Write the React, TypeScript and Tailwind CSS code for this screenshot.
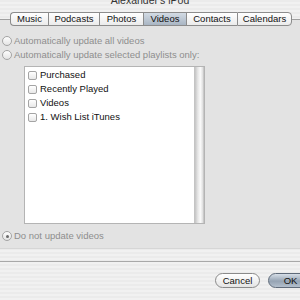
import React from 'react'

const tabs = [
  { name: 'Music', w: 'w-[38px]' },
  { name: 'Podcasts', w: 'w-[51px]' },
  { name: 'Photos', w: 'w-[44px]' },
  { name: 'Videos', w: 'w-[43px]', active: true },
  { name: 'Contacts', w: 'w-[51px]' },
  { name: 'Calendars', w: 'w-[55px]' },
]

const playlists = ['Purchased', 'Recently Played', 'Videos', '1. Wish List iTunes']

function Radio({ label, checked }: { label: string; checked?: boolean }) {
  return (
    <div className="flex items-center h-[14px] pl-[2px]">
      <span className="w-[10px] h-[10px] rounded-full border border-[#a4a4a4] bg-[linear-gradient(to_bottom,#fdfdfd,#e4e4e4)] flex items-center justify-center">
        {checked && <span className="w-[3px] h-[3px] rounded-full bg-[#6a6a6a]" />}
      </span>
      <span className="ml-[2px] text-[#8e8e8e] text-[9.5px] leading-none">{label}</span>
    </div>
  )
}

export default function App() {
  return (
    <div className="w-[300px] h-[300px] overflow-hidden bg-[repeating-linear-gradient(to_bottom,#ebebeb_0px,#ebebeb_2px,#f1f1f1_2px,#f1f1f1_4px)] font-['Liberation_Sans',Arial,sans-serif]">
      <div className="h-[5px] overflow-hidden flex justify-center">
        <span className="-mt-[5px] text-[10.5px] leading-[10px] text-[#333]">Alexander&apos;s iPod</span>
      </div>

      <div className="relative z-10 flex mt-[7px] ml-[10px] h-[14px]">
        {tabs.map((t, i) => (
          <div
            key={t.name}
            className={
              'flex items-center justify-center text-[9.5px] leading-none text-[#111] border-y border-[#8c8c8c] ' +
              t.w +
              (i === 0 ? ' border-l rounded-l-[4px]' : ' border-l') +
              (i === tabs.length - 1 ? ' border-r rounded-r-[4px]' : '') +
              (t.active
                ? ' bg-[linear-gradient(to_bottom,#d3dbe4,#a9b5c3)]'
                : ' bg-[linear-gradient(to_bottom,#ffffff,#ebebeb)]')
            }
          >
            {t.name}
          </div>
        ))}
      </div>

      <div className="-mt-[7px] -mx-[2px] border-t border-b border-[#a0a0a0] border-b-[#d6d6d6] bg-[#e3e3e3] pt-[14px] pb-[5px] pl-[2px]">
        <Radio label="Automatically update all videos" />
        <Radio label="Automatically update selected playlists only:" />
        <div className="mt-[4px] ml-[24px] w-[181px] h-[158px] flex border border-[#b4b4b4]">
          <div className="flex-1 bg-white pt-[1px]">
            {playlists.map(p => (
              <div key={p} className="flex items-center h-[14px] pl-[3px]">
                <span className="w-[9px] h-[9px] rounded-[2px] border border-[#a4a4a4] bg-[linear-gradient(to_bottom,#ffffff,#e8e8e8)]" />
                <span className="ml-[3px] text-[9.5px] leading-none text-[#111]">{p}</span>
              </div>
            ))}
          </div>
          <div className="w-[10px] border-l border-[#c4c4c4] bg-[linear-gradient(to_right,#c4c4c4,#e4e4e4_30%,#fafafa_60%,#dcdcdc_90%,#b0b0b0)]" />
        </div>
        <div className="mt-[5px]">
          <Radio label="Do not update videos" checked />
        </div>
      </div>

      <div className="mt-[12px] border-t border-[#a8a8a8]" />

      <div className="flex justify-end mt-[11px] -mr-[13px] gap-[8px]">
        <div className="w-[45px] h-[15px] rounded-full border border-[#8a8a8a] bg-[linear-gradient(to_bottom,#ffffff,#e4e4e4)] flex items-center justify-center text-[9.5px] leading-none text-[#111]">
          Cancel
        </div>
        <div className="w-[45px] h-[15px] rounded-full border border-[#5f6b7a] bg-[linear-gradient(to_bottom,#d6dee7,#95a3b3_55%,#b3bfcc)] flex items-center justify-center text-[9.5px] leading-none text-[#111]">
          OK
        </div>
      </div>
    </div>
  )
}
